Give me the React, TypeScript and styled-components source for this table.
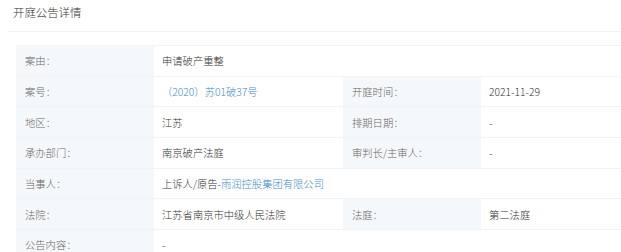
import React from 'react';
import styled, { createGlobalStyle } from 'styled-components';

const GlobalStyle = createGlobalStyle`
    html, body {
        margin: 0;
        padding: 0;
        background: #ffffff;
        font-family: "Noto Sans CJK SC", "Microsoft YaHei", "Noto Sans", sans-serif;
        overflow: hidden;
    }
`;

const Page = styled.div`
    width: 621px;
    height: 252px;
    overflow: hidden;
`;

// Title bar on top of the card
const Header = styled.div`
    box-sizing: border-box;
    height: 32px;
    margin-left: 8px;
    padding-left: 5px;
    border-bottom: 1px solid #f2f2f2;
    font-size: 11.4px;
    font-weight: 300;
    line-height: 24px;
    color: #333333;
`;

// The detail table, four columns
const Table = styled.div`
    display: grid;
    grid-template-columns: 138px 189px 138px 1fr;
    width: 620px;
    margin: 13px 0 0 16px;
    border-top: 1px solid #f2f3f5;
    font-size: 10.3px;
    font-weight: 300;
`;

const Cell = styled.div<{ $label?: boolean; $span?: number }>`
    box-sizing: border-box;
    height: 30.7px;
    display: flex;
    align-items: center;
    padding-left: ${props => (props.$label ? '9px' : '8px')};
    border-bottom: 1px solid #f2f3f5;
    background: ${props => (props.$label ? '#f5f8fa' : '#ffffff')};
    color: ${props => (props.$label ? '#666666' : '#333333')};
    grid-column: ${props => (props.$span ? `span ${props.$span}` : 'auto')};
    white-space: nowrap;
`;

const Link = styled.a`
    color: #3d8bd6;
    text-decoration: none;
`;

const rows: Array<[string, React.ReactNode, string?, React.ReactNode?]> = [
    ['案由：', '申请破产重整'],
    ['案号：', <Link href="#">（2020）苏01破37号</Link>, '开庭时间：', '2021-11-29'],
    ['地区：', '江苏', '排期日期：', '-'],
    ['承办部门：', '南京破产法庭', '审判长/主审人：', '-'],
    ['当事人：', <>上诉人/原告-<Link href="#">雨润控股集团有限公司</Link></>],
    ['法院：', '江苏省南京市中级人民法院', '法庭：', '第二法庭'],
    ['公告内容：', '-'],
];

const App = () => {
    return (
        <Page>
            <GlobalStyle />
            <Header>开庭公告详情</Header>
            <Table>
                {rows.map(([label, value, label2, value2], i) => (
                    <React.Fragment key={i}>
                        <Cell $label>{label}</Cell>
                        {label2 ? (
                            <>
                                <Cell>{value}</Cell>
                                <Cell $label>{label2}</Cell>
                                <Cell>{value2}</Cell>
                            </>
                        ) : (
                            <Cell $span={3}>{value}</Cell>
                        )}
                    </React.Fragment>
                ))}
            </Table>
        </Page>
    );
};

export default App;
